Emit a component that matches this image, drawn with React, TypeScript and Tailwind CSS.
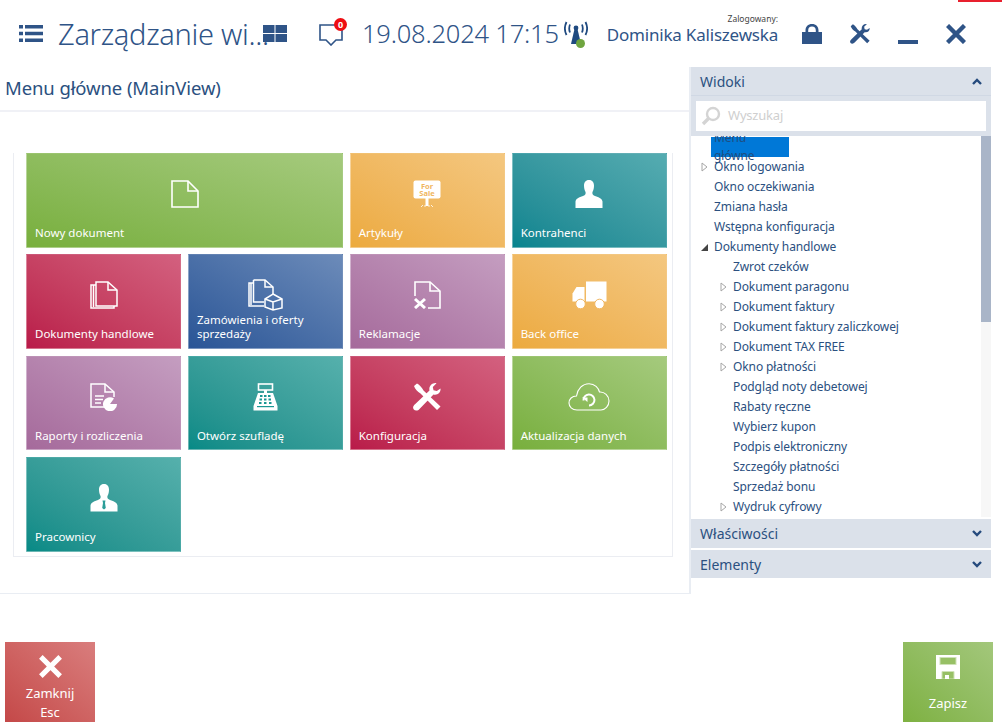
import type { ReactNode } from 'react'

const font = { fontFamily: '"Noto Sans", "Open Sans", sans-serif' }

function DocIcon() {
  return (
    <svg width="28" height="28" viewBox="0 0 28 28" fill="none" stroke="white" strokeWidth="1.6">
      <path d="M1 1H17L27 11V27H1Z" />
      <path d="M17 1V11H27" />
    </svg>
  )
}

function DocsIcon() {
  return (
    <svg width="28" height="28" viewBox="0 0 28 28" fill="none" stroke="white" strokeWidth="1.5">
      <path d="M6 1H18L27 9V25H6Z" />
      <path d="M18 1V9H27" />
      <path d="M6 4H1V27H24V25" />
      <path d="M3.5 4V26" />
    </svg>
  )
}

function OrdersIcon() {
  return (
    <svg width="36" height="32" viewBox="0 0 36 32" fill="none" stroke="white" strokeWidth="1.5">
      <path d="M5.5 1H17L25 8V15" />
      <path d="M17 1V8H25" />
      <path d="M5.5 1V23H16" />
      <path d="M5.5 4H1V27H16" />
      <path d="M3 4V26" />
      <path d="M25 15L34 20V29L25 31L17 28V20Z" />
      <path d="M17 20L25 23L34 20M25 23V31" />
    </svg>
  )
}

function ForSaleIcon() {
  return (
    <svg width="28" height="28" viewBox="0 0 28 28">
      <rect x="0.5" y="0.5" width="27" height="18" rx="2" fill="white" />
      <text x="14" y="8.5" textAnchor="middle" fontSize="7.5" fontWeight="700" fill="#f0b65f" style={font}>For</text>
      <text x="14" y="16" textAnchor="middle" fontSize="7.5" fontWeight="700" fill="#f0b65f" style={font}>Sale</text>
      <rect x="12.5" y="18" width="3" height="8" fill="white" />
      <path d="M8 27L10 25M20 27L18 25M12 27L12 25M16 27L16 25" stroke="white" strokeWidth="0.8" />
    </svg>
  )
}

function PersonIcon() {
  return (
    <svg width="28" height="28" viewBox="0 0 28 28" fill="white">
      <path d="M14 0C17.5 0 19 2.5 19 5.5C19 8 18.5 10 17.5 12C17 13.5 17.5 15 20 16C24 17.5 27 18.5 27.5 21.5V28H0.5V21.5C1 18.5 4 17.5 8 16C10.5 15 11 13.5 10.5 12C9.5 10 9 8 9 5.5C9 2.5 10.5 0 14 0Z" />
    </svg>
  )
}

function ClaimIcon() {
  return (
    <svg width="28" height="28" viewBox="0 0 28 28" fill="none" stroke="white" strokeWidth="1.6">
      <path d="M2 15V1H17L27 10V27H15" />
      <path d="M17 1V10H27" />
      <path d="M2 18L12 27M12 18L2 27" strokeWidth="3" />
    </svg>
  )
}

function TruckIcon() {
  return (
    <svg width="35" height="28" viewBox="0 0 35 28" fill="white">
      <rect x="14" y="0.5" width="20.5" height="20" />
      <path d="M12.5 6V20.5H0.5V12.5L4.5 6Z" />
      <circle cx="8.5" cy="23" r="4.8" stroke="#f0b65f" strokeWidth="1" />
      <circle cx="27.5" cy="23" r="4.8" stroke="#f0b65f" strokeWidth="1" />
    </svg>
  )
}

function ReportIcon() {
  return (
    <svg width="28" height="28" viewBox="0 0 28 28" fill="none" stroke="white" strokeWidth="1.5">
      <path d="M14 24H1V1H15L24 9V14" />
      <path d="M15 1V9H24" />
      <path d="M5 13H14M5 16.5H13M5 20H11" strokeWidth="1.4" />
      <path d="M27 21A7 7 0 1 1 24 15.5L20 21Z" fill="white" stroke="none" />
    </svg>
  )
}

function RegisterIcon() {
  return (
    <svg width="25" height="28" viewBox="0 0 25 28" fill="white">
      <rect x="5.5" y="1" width="14" height="6" fill="none" stroke="white" strokeWidth="1.6" />
      <rect x="11" y="7" width="3" height="3" />
      <path d="M5 10H20L24.5 23V27.5H0.5V23Z" />
      <g fill="#1a9794">
        <rect x="7" y="12" width="2.5" height="2" /><rect x="11" y="12" width="2.5" height="2" /><rect x="15" y="12" width="2.5" height="2" />
        <rect x="6.5" y="15.5" width="2.5" height="2" /><rect x="11" y="15.5" width="2.5" height="2" /><rect x="15.5" y="15.5" width="2.5" height="2" />
        <rect x="6" y="19" width="2.5" height="2" /><rect x="11" y="19" width="2.5" height="2" /><rect x="16" y="19" width="2.5" height="2" />
        <rect x="4" y="23" width="17" height="1.2" />
      </g>
    </svg>
  )
}

function ToolsIcon({ size = 28, color = 'white' }: { size?: number; color?: string }) {
  return (
    <svg width={size} height={size} viewBox="0 0 28 28" fill={color}>
      <path d="M1 3L4 0.5C6 1.5 9 4.5 10.5 7.5L27.5 23.5L24 27L7.5 10.5C4.5 9 2 6 1 3Z" />
      <path d="M27.5 5.5C28 9 25 12.5 20.5 11.5L6.5 26C5 28 2 28 0.8 26.5C-0.5 25 0 22.8 2 21.2L16.5 7.5C15.5 3.5 19 -0.5 23.5 0.2L19.8 4L20.5 7.2L23.8 8Z" />
    </svg>
  )
}

function CloudIcon() {
  return (
    <svg width="42" height="28" viewBox="0 0 42 28" fill="none" stroke="white" strokeWidth="1.1">
      <path d="M9 27C4 27 1 23.5 1 20C1 16 4 13 8.5 13C9.5 6 14.5 0.7 21 0.7C27 0.7 30.5 5 31.5 9C36.5 8.5 41 13 41 18C41 23 37 27 33 27Z" />
      <path d="M15.5 17.5A5.5 5.5 0 1 1 21 22.5" strokeWidth="2" />
      <path d="M14 14.5H19.5V19" strokeWidth="0" fill="white" />
    </svg>
  )
}

function ClerkIcon() {
  return (
    <svg width="28" height="28" viewBox="0 0 28 28" fill="white">
      <path d="M14 0C17.5 0 19 2.5 19 5.5C19 8 18.5 10 17.5 12C17 13.5 17.5 15 20 16C24 17.5 27 18.5 27.5 21.5V27.5H0.5V21.5C1 18.5 4 17.5 8 16C10.5 15 11 13.5 10.5 12C9.5 10 9 8 9 5.5C9 2.5 10.5 0 14 0Z" />
      <path d="M12.5 16.5H15.5L15 19L15.8 24L14 25.5L12.2 24L13 19Z" fill="#2b9d98" />
    </svg>
  )
}

type TileProps = { label: ReactNode; icon: ReactNode; color: string; wide?: boolean }

function Tile({ label, icon, color, wide }: TileProps) {
  return (
    <div className={`flex flex-col items-center border border-white/25 pt-[26px] ${color} ${wide ? 'col-span-2' : ''}`}>
      <div className="flex h-[28px] items-center justify-center">{icon}</div>
      <div className="mt-auto mb-[6px] w-full pl-[8px] text-[11.5px] leading-[14.6px] text-white">{label}</div>
    </div>
  )
}

const green = 'bg-linear-to-tr from-[#78af3c] to-[#a5ca7d]'
const orange = 'bg-linear-to-tr from-[#ecaa3e] to-[#f4c77f]'
const teal = 'bg-linear-to-tr from-[#06848f] to-[#55acb1]'
const sea = 'bg-linear-to-tr from-[#058a86] to-[#55b0ac]'
const red = 'bg-linear-to-tr from-[#b91a49] to-[#d3607f]'
const blue = 'bg-linear-to-tr from-[#2a5596] to-[#6c8bb9]'
const purple = 'bg-linear-to-tr from-[#a56a9b] to-[#c49dc0]'

const tree: { text: string; level: 0 | 1; arrow?: 'open' | 'closed' }[] = [
  { text: 'Okno logowania', level: 0, arrow: 'closed' },
  { text: 'Okno oczekiwania', level: 0 },
  { text: 'Zmiana hasła', level: 0 },
  { text: 'Wstępna konfiguracja', level: 0 },
  { text: 'Dokumenty handlowe', level: 0, arrow: 'open' },
  { text: 'Zwrot czeków', level: 1 },
  { text: 'Dokument paragonu', level: 1, arrow: 'closed' },
  { text: 'Dokument faktury', level: 1, arrow: 'closed' },
  { text: 'Dokument faktury zaliczkowej', level: 1, arrow: 'closed' },
  { text: 'Dokument TAX FREE', level: 1, arrow: 'closed' },
  { text: 'Okno płatności', level: 1, arrow: 'closed' },
  { text: 'Podgląd noty debetowej', level: 1 },
  { text: 'Rabaty ręczne', level: 1 },
  { text: 'Wybierz kupon', level: 1 },
  { text: 'Podpis elektroniczny', level: 1 },
  { text: 'Szczegóły płatności', level: 1 },
  { text: 'Sprzedaż bonu', level: 1 },
  { text: 'Wydruk cyfrowy', level: 1, arrow: 'closed' },
]

function Arrow({ open }: { open?: boolean }) {
  if (open) {
    return (
      <svg width="7" height="7" viewBox="0 0 7 7">
        <path d="M7 0V7H0Z" fill="#444" />
      </svg>
    )
  }
  return (
    <svg width="7" height="10" viewBox="0 0 7 10" fill="none" stroke="#a6a6a6">
      <path d="M1 1L6 5L1 9Z" />
    </svg>
  )
}

function Chevron({ up }: { up?: boolean }) {
  return (
    <svg width="10" height="7" viewBox="0 0 10 7" fill="none" stroke="#254a7d" strokeWidth="2.4">
      <path d={up ? 'M1 6L5 2L9 6' : 'M1 1L5 5L9 1'} />
    </svg>
  )
}

function SectionHeader({ title, up, className }: { title: string; up?: boolean; className: string }) {
  return (
    <div className={`flex items-center justify-between bg-[#dbe1ea] pr-[9px] pl-[9px] text-[14px] text-[#2b5080] ${className}`}>
      <span>{title}</span>
      <Chevron up={up} />
    </div>
  )
}

export default function App() {
  return (
    <div className="h-[727px] w-[1002px] overflow-hidden bg-white" style={font}>
      <div className="relative flex h-[67px] items-center text-[#2f5487]">
        <div className="absolute top-0 right-0 h-[2px] w-[44px] bg-[#e8202e]" />
        <svg className="ml-[19px] shrink-0" width="24" height="17" viewBox="0 0 24 17" fill="#2f5487">
          <path d="M0 0H4V3.5H0ZM6 0H24V3.5H6ZM0 6.7H4V10.2H0ZM6 6.7H24V10.2H6ZM0 13.4H4V17H0ZM6 13.4H24V17H6Z" />
        </svg>
        <div className="ml-[15px] w-[205px] shrink-0 text-[29px] leading-none font-light tracking-[-0.3px] whitespace-nowrap">Zarządzanie wi...</div>
        <svg className="shrink-0" width="24" height="17" viewBox="0 0 24 17" fill="#2f5487">
          <path d="M0 0H11.5V8H0ZM12.5 0H24V8H12.5ZM0 9H11.5V17H0ZM12.5 9H24V17H12.5Z" />
        </svg>
        <div className="relative ml-[32px] h-[24px] w-[24px] shrink-0">
          <svg width="24" height="24" viewBox="0 0 24 24" fill="none" stroke="#2f5487" strokeWidth="1.6">
            <path d="M1 3H23V18H17L12 23L7 18H1Z" />
          </svg>
          <div className="absolute -top-[4px] left-[15px] flex h-[13px] w-[13px] items-center justify-center rounded-full bg-[#ee0d12] text-[9px] leading-none font-bold text-white">0</div>
        </div>
        <div className="ml-[19px] w-[202px] shrink-0 text-[25.5px] leading-none font-light tracking-[-0.2px] whitespace-nowrap">19.08.2024 17:15</div>
        <div className="relative h-[28px] w-[24px] shrink-0">
          <svg width="24" height="28" viewBox="0 0 24 28" fill="none" stroke="#1f4a80" strokeWidth="1.8">
            <path d="M2.5 2C0.5 6 0.5 11 2.5 15M21.5 2C23.5 6 23.5 11 21.5 15M6 4.5C5 7 5 10 6 12.5M18 4.5C19 7 19 10 18 12.5" />
            <circle cx="12" cy="8" r="2.4" fill="#1f4a80" stroke="none" />
            <path d="M10.5 9H13.5L17 24H7Z" fill="#1f4a80" stroke="none" />
          </svg>
          <div className="absolute top-[19px] left-[12px] h-[9px] w-[9px] rounded-full bg-[#6fa53f]" />
        </div>
        <div className="ml-[17px] flex w-[173px] shrink-0 flex-col items-end">
          <div className="-mt-[7px] text-[8.5px] leading-[10px] text-[#444]">Zalogowany:</div>
          <div className="text-[17px] leading-[22px] tracking-[-0.2px] whitespace-nowrap">Dominika Kaliszewska</div>
        </div>
        <svg className="ml-[24px] shrink-0" width="20" height="20" viewBox="0 0 20 20" fill="#2f5487">
          <path d="M3.5 8V6.5C3.5 2.5 6 0 10 0S16.5 2.5 16.5 6.5V8H20V20H0V8ZM6.2 8H13.8V6.5C13.8 4 12.5 2.5 10 2.5S6.2 4 6.2 6.5Z" fillRule="evenodd" />
        </svg>
        <div className="ml-[28px] shrink-0">
          <ToolsIcon size={20} color="#2f5487" />
        </div>
        <div className="mt-[17px] ml-[28px] h-[4px] w-[20px] shrink-0 bg-[#2f5487]" />
        <svg className="ml-[28px] shrink-0" width="20" height="20" viewBox="0 0 20 20" stroke="#2f5487" strokeWidth="4.4">
          <path d="M1.5 1.5L18.5 18.5M18.5 1.5L1.5 18.5" />
        </svg>
      </div>

      <div className="flex h-[527px]">
        <div className="flex w-[691px] shrink-0 flex-col border-r-2 border-b border-[#e9edf3]">
          <div className="flex h-[45px] items-center border-b-2 border-[#f0f1f6] pb-[2px] pl-[5px] text-[18.5px] tracking-[-0.1px] text-[#2b5080]">
            Menu główne (MainView)
          </div>
          <div className="mt-[41px] ml-[13px] h-[404px] w-[660px] border border-t-0 border-[#ebedf2] pl-[12px]">
            <div className="grid w-[641px] grid-cols-4 gap-x-[6.5px] gap-y-[6.5px] auto-rows-[94.75px]">
              <Tile wide label="Nowy dokument" icon={<DocIcon />} color={green} />
              <Tile label="Artykuły" icon={<ForSaleIcon />} color={orange} />
              <Tile label="Kontrahenci" icon={<PersonIcon />} color={teal} />
              <Tile label="Dokumenty handlowe" icon={<DocsIcon />} color={red} />
              <Tile label={<>Zamówienia i oferty<br />sprzedaży</>} icon={<OrdersIcon />} color={blue} />
              <Tile label="Reklamacje" icon={<ClaimIcon />} color={purple} />
              <Tile label="Back office" icon={<TruckIcon />} color={orange} />
              <Tile label="Raporty i rozliczenia" icon={<ReportIcon />} color={purple} />
              <Tile label="Otwórz szufladę" icon={<RegisterIcon />} color={sea} />
              <Tile label="Konfiguracja" icon={<ToolsIcon />} color={red} />
              <Tile label="Aktualizacja danych" icon={<CloudIcon />} color={green} />
              <Tile label="Pracownicy" icon={<ClerkIcon />} color={sea} />
            </div>
          </div>
        </div>

        <div className="w-[300px] shrink-0">
          <SectionHeader title="Widoki" up className="h-[29px] border-b border-[#d0d8e4]" />
          <div className="h-[40px] bg-[#dbe1ea] px-[5px] pt-[5px]">
            <div className="flex h-[30px] items-center bg-white pl-[5px]">
              <svg width="20" height="20" viewBox="0 0 20 20" fill="none" stroke="#d4d4d4">
                <circle cx="12" cy="8" r="6" strokeWidth="2.4" />
                <path d="M7.5 12.5L2 18" strokeWidth="3.4" />
              </svg>
              <span className="ml-[7px] text-[13px] tracking-[-0.2px] text-[#cfcfcf]">Wyszukaj</span>
            </div>
          </div>
          <div className="flex h-[381px] overflow-hidden">
            <div className="w-[290px] pt-[1px] text-[12px] tracking-[-0.1px] text-[#2b5080]">
              <div className="ml-[20px] flex h-[20px] w-[78px] items-center bg-[#0078d7] pl-[3px] text-[#1f4d80]">Menu główne</div>
              {tree.map((row) => (
                <div key={row.text} className={`relative flex h-[20px] items-center ${row.level === 1 ? 'pl-[42px]' : 'pl-[23px]'}`}>
                  {row.arrow && (
                    <span className={`absolute top-[4px] flex h-[12px] items-center ${row.level === 1 ? 'left-[29px]' : 'left-[10px]'}`}>
                      <Arrow open={row.arrow === 'open'} />
                    </span>
                  )}
                  {row.text}
                </div>
              ))}
            </div>
            <div className="w-[10px] bg-[#f7f7f7]">
              <div className="h-[186px] bg-[#a9b5c8]" />
            </div>
          </div>
          <SectionHeader title="Właściwości" className="mt-[2px] h-[29px]" />
          <SectionHeader title="Elementy" className="mt-[2px] h-[28px]" />
        </div>
      </div>

      <div className="mt-[48px] flex justify-between pr-[9px] pl-[5px] text-[13px] leading-[19px] text-white">
        <div className="flex h-[80px] w-[90px] flex-col items-center bg-linear-to-tr from-[#c44848] to-[#d97d7d] pt-[13px]">
          <svg width="25" height="25" viewBox="0 0 25 25" stroke="white" strokeWidth="5.5">
            <path d="M2 2L23 23M23 2L2 23" />
          </svg>
          <div className="mt-[6px] text-center">Zamknij<br />Esc</div>
        </div>
        <div className="flex h-[80px] w-[90px] flex-col items-center bg-linear-to-tr from-[#7eb141] to-[#a3c77b] pt-[13px]">
          <svg width="24" height="24" viewBox="0 0 24 24" fill="white">
            <path d="M0 0H24V24H0Z" />
            <rect x="4" y="2.5" width="16" height="7" fill="#97c065" stroke="#cfe2b8" />
            <path d="M6 24V16.5H18V24Z" fill="#97c065" stroke="#cfe2b8" />
            <rect x="9" y="20" width="4" height="4" fill="white" />
          </svg>
          <div className="mt-[15px] text-center">Zapisz</div>
        </div>
      </div>
    </div>
  )
}
